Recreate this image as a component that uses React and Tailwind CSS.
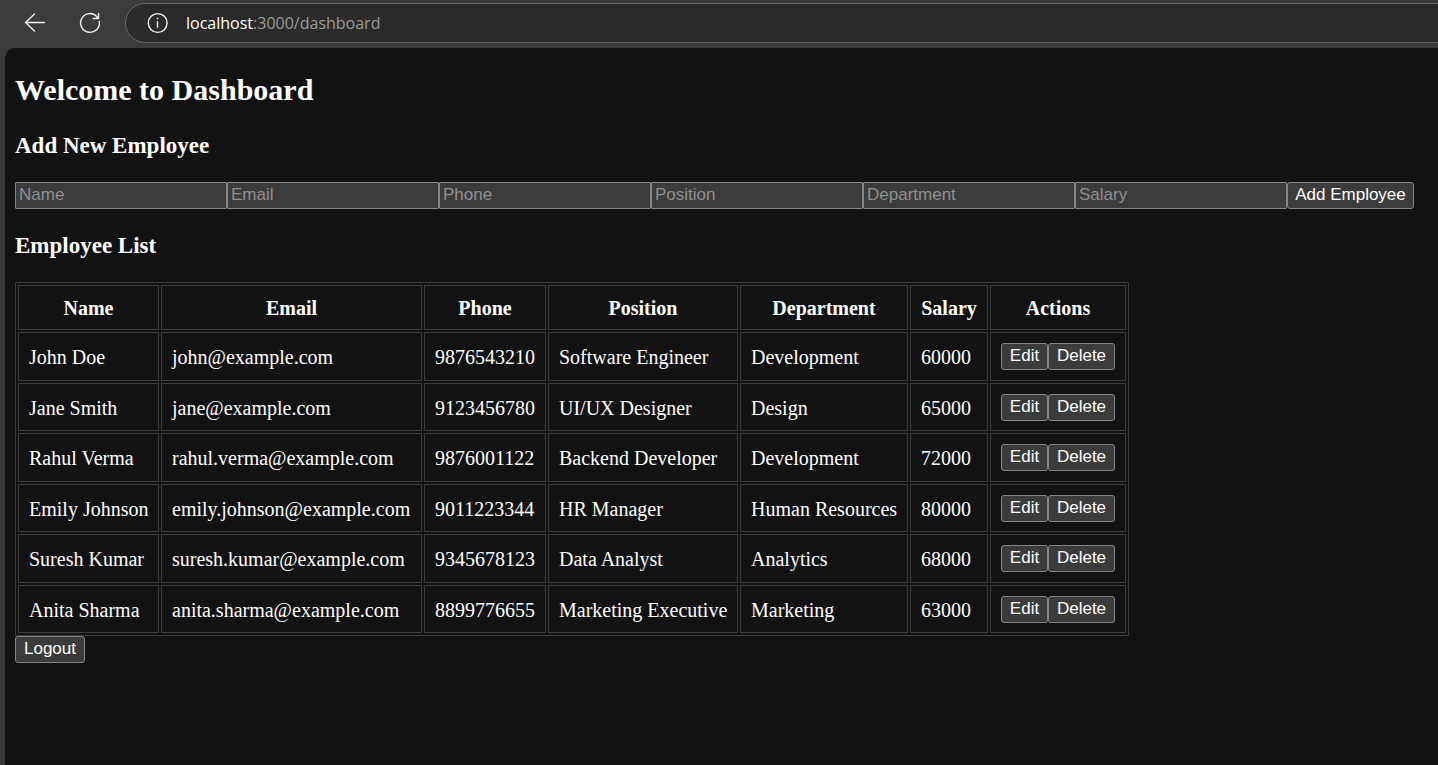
const fields = ['Name', 'Email', 'Phone', 'Position', 'Department', 'Salary'];

const employees = [
  ['John Doe', 'john@example.com', '9876543210', 'Software Engineer', 'Development', '60000'],
  ['Jane Smith', 'jane@example.com', '9123456780', 'UI/UX Designer', 'Design', '65000'],
  ['Rahul Verma', 'rahul.verma@example.com', '9876001122', 'Backend Developer', 'Development', '72000'],
  ['Emily Johnson', 'emily.johnson@example.com', '9011223344', 'HR Manager', 'Human Resources', '80000'],
  ['Suresh Kumar', 'suresh.kumar@example.com', '9345678123', 'Data Analyst', 'Analytics', '68000'],
  ['Anita Sharma', 'anita.sharma@example.com', '8899776655', 'Marketing Executive', 'Marketing', '63000'],
];

const columnWidths = ['w-[141px]', 'w-[261px]', 'w-[122px]', 'w-[190px]', 'w-[168px]', 'w-[78px]', 'w-[136px]'];

function PlainButton({ width, children, type = 'button' }) {
  return (
    <button
      type={type}
      className={`${width} h-[27px] shrink-0 whitespace-nowrap rounded-[3px] border border-[#858585] bg-[#3b3b3b] pb-[2px] text-center font-['Liberation_Sans',Arial,sans-serif] text-[17px] leading-[23px] text-white`}
    >
      {children}
    </button>
  );
}

function BrowserBar() {
  return (
    <header className="flex h-12 items-start overflow-hidden">
      <button type="button" aria-label="Back" className="mt-[11px] ml-[23px] h-6 w-6">
        <svg viewBox="0 0 24 24" className="h-6 w-6" fill="none" stroke="#f0f0f0" strokeWidth="1.4" strokeLinecap="round" strokeLinejoin="round">
          <path d="M21.5 11.5H2.5M11.5 3 2.5 11.5l9 8.5" />
        </svg>
      </button>
      <button type="button" aria-label="Refresh" className="mt-[11px] ml-[31px] h-6 w-6">
        <svg viewBox="0 0 24 24" className="h-6 w-6" fill="none" stroke="#f0f0f0" strokeWidth="1.4" strokeLinecap="round" strokeLinejoin="round">
          <path d="M21.3 10.5A9.4 9.4 0 1 1 17.6 4.4L20.3 7.3M20.5 2.5v5h-5.3" />
        </svg>
      </button>
      <div className="mt-[3px] -mr-px ml-[23px] flex h-10 min-w-0 flex-1 items-center rounded-l-full border border-[#6a6a6a] bg-[#2a2a2a]">
        <svg viewBox="0 0 24 24" className="ml-5 h-6 w-6 shrink-0" fill="none" stroke="#f0f0f0" strokeWidth="1.4">
          <circle cx="11.7" cy="12" r="9.4" />
          <path d="M11.5 10.2V16.8" />
          <circle cx="11.5" cy="7.5" r="0.6" fill="#f0f0f0" strokeWidth="0.6" />
        </svg>
        <a href="#dashboard" className="ml-4 whitespace-nowrap font-['Open_Sans',sans-serif] text-[16px] leading-6 text-[#9a9a9a]">
          <span className="text-white">localhost</span>:3000/dashboard
        </a>
      </div>
    </header>
  );
}

export default function App() {
  return (
    <div className="flex min-h-screen flex-col bg-[#3b3b3b]">
      <BrowserBar />
      <main className="ml-[5px] flex-1 rounded-tl-[10px] bg-[#121212] pl-[10px] font-['Liberation_Serif','Times_New_Roman',serif] text-[20px] text-white">
        <h2 className="pt-[25px] text-[30px] leading-[34px] font-bold">Welcome to Dashboard</h2>
        <h3 className="mt-[25px] text-[23px] leading-[27px] font-bold">Add New Employee</h3>
        <form className="mt-[23px] flex" onSubmit={(event) => event.preventDefault()}>
          {fields.map((field) => (
            <input
              key={field}
              aria-label={field}
              placeholder={field}
              className="h-[27px] w-[212px] rounded-[1px] border border-[#858585] bg-[#3b3b3b] px-[3px] pb-[2px] font-['Liberation_Sans',Arial,sans-serif] text-[17px] leading-[23px] text-white placeholder:text-[#8f8f8f]"
            />
          ))}
          <PlainButton type="submit" width="w-[127px]">Add Employee</PlainButton>
        </form>
        <h3 className="mt-[23px] text-[23px] leading-[27px] font-bold">Employee List</h3>
        <table className="mt-[23px] w-[1114px] table-fixed border-separate border-spacing-[2px] border border-[#3c3c3c]">
          <colgroup>
            {columnWidths.map((width, i) => (
              <col key={i} className={width} />
            ))}
          </colgroup>
          <thead>
            <tr className="h-[45px]">
              {[...fields, 'Actions'].map((heading) => (
                <th key={heading} scope="col" className="border border-[#3c3c3c] px-0 pt-[2px] pb-0 text-center leading-[23px] font-bold">{heading}</th>
              ))}
            </tr>
          </thead>
          <tbody>
            {employees.map((employee) => (
              <tr key={employee[1]} className="h-12 odd:h-[49px]">
                {employee.map((value, i) => (
                  <td key={i} className="border border-[#3c3c3c] px-[10px] pt-[2px] pb-0 leading-[23px] whitespace-nowrap">{value}</td>
                ))}
                <td className="border border-[#3c3c3c] px-[10px] py-0">
                  <div className="flex">
                    <PlainButton width="w-[47px]">Edit</PlainButton>
                    <PlainButton width="w-[67px]">Delete</PlainButton>
                  </div>
                </td>
              </tr>
            ))}
          </tbody>
        </table>
        <div className="flex">
          <PlainButton width="w-[70px]">Logout</PlainButton>
        </div>
      </main>
    </div>
  );
}
